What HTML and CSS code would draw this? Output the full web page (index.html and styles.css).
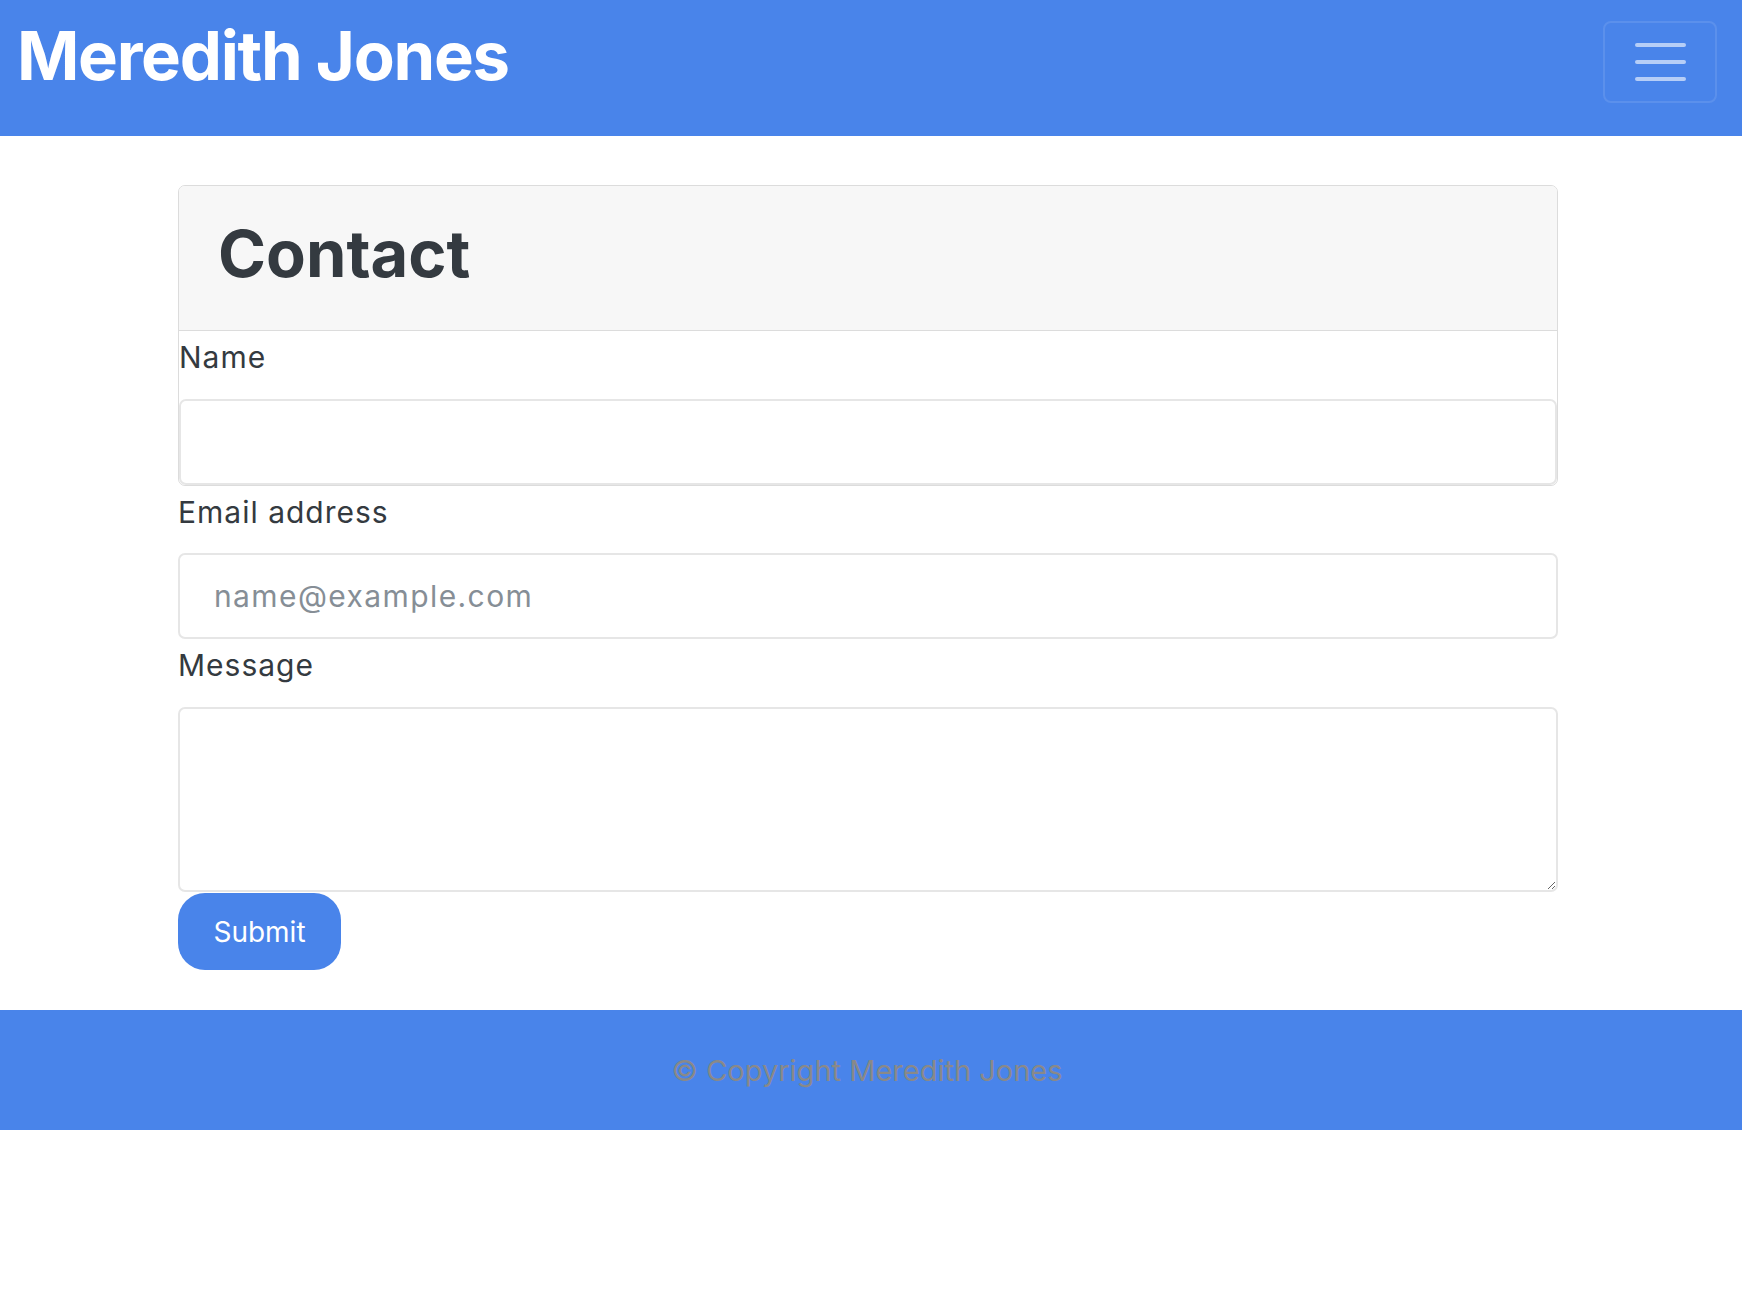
FILE: index.html
```html
<!DOCTYPE html>
<html lang="en">
<head>
<meta charset="utf-8">
<title>Contact - Meredith Jones</title>
<link rel="stylesheet" href="styles.css">
</head>
<body>
<header class="topbar">
  <h1 class="brand">Meredith Jones</h1>
  <button class="toggler" type="button" aria-label="Toggle navigation">
    <span class="bar"></span>
    <span class="bar"></span>
    <span class="bar"></span>
  </button>
</header>
<main class="container">
  <section class="card">
    <div class="card-header">
      <h2 class="card-title">Contact</h2>
    </div>
    <div class="card-body">
      <label class="field-label" for="name">Name</label>
      <input class="field" id="name" type="text">
    </div>
  </section>
  <label class="field-label" for="email">Email address</label>
  <input class="field" id="email" type="email" placeholder="name@example.com">
  <label class="field-label" for="message">Message</label>
  <textarea class="field area" id="message"></textarea>
  <button class="submit" type="submit">Submit</button>
</main>
<footer class="footer">
  <p class="footer-text">© Copyright Meredith Jones</p>
</footer>
</body>
</html>
```
FILE: styles.css
```css
* { box-sizing: border-box; }

body {
  margin: 0;
  font-family: Inter, "Noto Sans", "Liberation Sans", sans-serif;
  color: #343a40;
  background: #ffffff;
}

.topbar {
  background: #4984ea;
  height: 136px;
  display: flex;
  justify-content: space-between;
  align-items: flex-start;
  padding: 15px 25px 0 17px;
}

.brand {
  margin: 0;
  color: #ffffff;
  font-size: 67px;
  line-height: 81px;
  font-weight: 700;
  letter-spacing: -1.3px;
}

.toggler {
  margin-top: 6px;
  width: 114px;
  height: 82px;
  background: transparent;
  border: 2px solid rgba(255, 255, 255, 0.1);
  border-radius: 8px;
  display: flex;
  flex-direction: column;
  align-items: center;
  justify-content: center;
  gap: 13px;
  padding: 0;
}

.bar {
  display: block;
  width: 51px;
  height: 4px;
  border-radius: 2px;
  background: rgba(255, 255, 255, 0.6);
}

.container {
  width: 1380px;
  margin: 49px auto 40px 178px;
}

.card {
  border: 1px solid #dcdcdc;
  border-radius: 7px;
  overflow: hidden;
}

.card-header {
  background: #f7f7f7;
  border-bottom: 1px solid #dcdcdc;
  padding: 28px 39px 37px;
}

.card-title {
  margin: 0;
  font-size: 65px;
  line-height: 79px;
  font-weight: 700;
  color: #343a40;
}

.card-body {
  padding: 0;
}

.field-label {
  display: block;
  font-size: 30px;
  line-height: 52px;
  letter-spacing: 1px;
  margin-bottom: 15.5px;
  color: #343a40;
}

.field {
  display: block;
  width: 100%;
  height: 86px;
  border: 2px solid #e6e6e6;
  border-radius: 7px;
  padding: 0 34px;
  font-family: inherit;
  font-size: 30px;
  letter-spacing: 1.4px;
  color: #343a40;
  background: #ffffff;
}

.field::placeholder {
  color: #868e96;
}

.area {
  height: 185px;
  resize: vertical;
  padding: 16px 34px;
}

.submit {
  display: block;
  margin-top: 1.5px;
  width: 163px;
  height: 77px;
  border: none;
  border-radius: 27px;
  background: #4984ea;
  color: #ffffff;
  font-family: inherit;
  font-size: 28px;
}

.footer {
  background: #4984ea;
  height: 120px;
  display: flex;
  align-items: center;
  justify-content: center;
  padding-right: 8px;
}

.footer-text {
  margin: 0;
  font-size: 29px;
  color: #898989;
}
```
